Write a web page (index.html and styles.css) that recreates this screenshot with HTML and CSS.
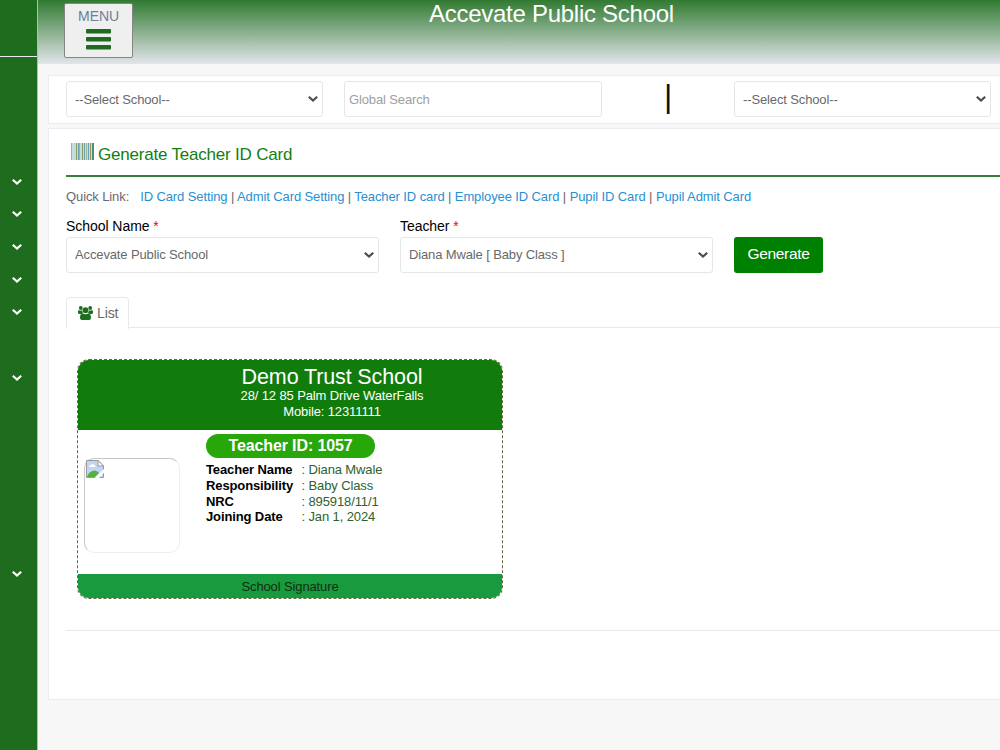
FILE: index.html
```html
<!DOCTYPE html>
<html lang="en">
<head>
  <meta charset="UTF-8">
  <title>Generate Teacher ID Card</title>
  <link rel="stylesheet" href="styles.css">
</head>
<body>
  <svg width="0" height="0" class="defs">
    <symbol id="chevron" viewBox="0 0 12 8"><path d="M1.8 1.8 L6 5.6 L10.2 1.8" fill="none" stroke="currentColor" stroke-width="2.2"/></symbol>
  </svg>

  <aside class="sidebar">
    <div class="side-logo"></div>
    <ul class="side-nav">
      <li><svg><use href="#chevron"/></svg></li>
      <li><svg><use href="#chevron"/></svg></li>
      <li><svg><use href="#chevron"/></svg></li>
      <li><svg><use href="#chevron"/></svg></li>
      <li><svg><use href="#chevron"/></svg></li>
      <li></li>
      <li><svg><use href="#chevron"/></svg></li>
      <li></li>
      <li></li>
      <li></li>
      <li></li>
      <li></li>
      <li><svg><use href="#chevron"/></svg></li>
    </ul>
  </aside>

  <div class="main">
    <header class="topbar">
      <button class="menu-btn" type="button">
        <span>MENU</span>
        <svg width="25" height="21" viewBox="0 0 25 21" fill="#1e6c1e"><rect y="0" width="25" height="4.6" rx="1"/><rect y="8" width="25" height="4.6" rx="1"/><rect y="16" width="25" height="4.6" rx="1"/></svg>
      </button>
      <h1>Accevate Public School</h1>
    </header>

    <section class="panel filter">
      <div class="select-wrap"><select class="control"><option>--Select School--</option></select><svg><use href="#chevron"/></svg></div>
      <input class="control search" type="text" placeholder="Global Search">
      <span class="bar">|</span>
      <div class="select-wrap"><select class="control"><option>--Select School--</option></select><svg><use href="#chevron"/></svg></div>
    </section>

    <section class="panel content">
      <h2>
        <svg width="24" height="17" viewBox="0 0 24 17"><path d="M0 0h23v17H0z" fill="#c5dcd8"/><path d="M.5 0v17M8.500 0v17M15.500 0v17" stroke="#9db59a"/><path d="M5.500 0v17M11.500 0v17" stroke="#8c9c68"/><path d="M7.500 0v17M13.500 0v17M17.500 0v17" stroke="#6da2b0"/><path d="M19.500 0v17" stroke="#9a9860"/><path d="M22 0v17" stroke="#4d8d80" stroke-width="2"/></svg>
        <span>Generate Teacher ID Card</span>
      </h2>

      <p class="quick"><span>Quick Link:</span><a href="#">ID Card Setting</a> | <a href="#">Admit Card Setting</a> | <a href="#">Teacher ID card</a> | <a href="#">Employee ID Card</a> | <a href="#">Pupil ID Card</a> | <a href="#">Pupil Admit Card</a></p>

      <form class="row">
        <div class="field">
          <label>School Name <em>*</em></label>
          <div class="select-wrap"><select class="control"><option>Accevate Public School</option></select><svg><use href="#chevron"/></svg></div>
        </div>
        <div class="field">
          <label>Teacher <em>*</em></label>
          <div class="select-wrap"><select class="control"><option>Diana Mwale [ Baby Class ]</option></select><svg><use href="#chevron"/></svg></div>
        </div>
        <button class="generate" type="button">Generate</button>
      </form>

      <div class="tabs">
        <div class="tab">
          <svg width="15" height="14" viewBox="0 0 15 14" fill="#1e6c1e"><circle cx="2.800" cy="2" r="1.900"/><circle cx="12.200" cy="2" r="1.900"/><circle cx="7.500" cy="4.200" r="2.900"/><path d="M0 6.800V5.200Q.3 3.900 1.400 4.200Q2.800 5 4.100 4.300Q4.300 6 5 6.800Q3.500 7 2.800 7.900H1.200Q0 7.900 0 6.800zM15 6.800V5.200Q14.700 3.900 13.600 4.200Q12.200 5 10.900 4.300Q10.700 6 10 6.800Q11.500 7 12.200 7.900H13.800Q15 7.900 15 6.800zM2 12Q2 7.300 4.600 7.300Q7.500 9.300 10.400 7.300Q13 7.300 13 12Q13 14 11 14H4Q2 14 2 12z"/></svg>
          List
        </div>
      </div>

      <div class="id-card">
        <div class="card-head">
          <div class="school">Demo Trust School</div>
          <div>28/ 12 85 Palm Drive WaterFalls</div>
          <div>Mobile: 12311111</div>
        </div>
        <div class="card-body">
          <div class="photo">
            <svg width="18" height="18" viewBox="0 0 18 18"><path d="M.5.500H12L17.500 6V17.500H.5z" fill="#c3d5f6" stroke="#999"/><path d="M3 7Q3 5 5 5Q6 3 8 5Q9.500 5 9.500 7z" fill="#fff"/><path d="M1 17Q3 10.500 9 10.500Q12 11 13 13L9 17z" fill="#53b13e"/><path d="M8.500 18L18 9V12.500L13 18z" fill="#fff"/><path d="M12 .5V6H17.500z" fill="#fff" stroke="#999"/></svg>
          </div>
          <div class="details">
            <div class="badge">Teacher ID: 1057</div>
            <dl>
              <dt>Teacher Name</dt><dd>: Diana Mwale</dd>
              <dt>Responsibility</dt><dd>: Baby Class</dd>
              <dt>NRC</dt><dd>: 895918/11/1</dd>
              <dt>Joining Date</dt><dd>: Jan 1, 2024</dd>
            </dl>
          </div>
        </div>
        <div class="card-foot">School Signature</div>
      </div>
      <hr>
    </section>
  </div>
</body>
</html>
```
FILE: styles.css
```css
* {
  box-sizing: border-box;
}
body {
  margin: 0;
  height: 750px;
  display: flex;
  overflow: hidden;
  background: #f7f7f7;
  color: #676a6c;
  font-family: "Liberation Sans", Arial, sans-serif;
  font-size: 13px;
  letter-spacing: -0.12px;
}
h1, h2, p, ul, dl, dd {
  margin: 0;
  padding: 0;
  font-weight: normal;
}
.defs {
  position: absolute;
}

/* sidebar */
.sidebar {
  flex: 0 0 38px;
  background: #1e6c1e;
  border-right: 1px solid #a9c6a9;
}
.side-logo {
  height: 57px;
  border-bottom: 1px solid #e7eaec;
}
.side-nav {
  list-style: none;
  padding-top: 107.500px;
}
.side-nav li {
  height: 32.7px;
  padding: 13px 0 0 11px;
}
.side-nav svg {
  display: block;
  width: 12px;
  height: 8px;
  color: #fff;
}

/* top bar */
.main {
  flex: 1;
  min-width: 0;
}
.topbar {
  height: 64px;
  display: flex;
  background: linear-gradient(#317a31, #e2e5ea);
}
.menu-btn {
  width: 69px;
  height: 55px;
  margin: 3px 0 0 26px;
  padding: 0;
  display: flex;
  flex-direction: column;
  align-items: center;
  background: #efefef;
  border: 1px solid #858585;
  border-radius: 2px;
  color: #6c8096;
  font: 14px/16px "Liberation Sans", Arial, sans-serif;
  letter-spacing: -0.1px;
}
.menu-btn span {
  margin: 4px 0 5px;
}
h1 {
  margin-left: 296px;
  color: #fff;
  font-size: 24px;
  line-height: 28px;
  letter-spacing: -0.27px;
}

/* panels */
.panel {
  width: 970px;
  margin-left: 10px;
  background: #fff;
  border: 1px solid #ececf2;
}
.filter {
  height: 49px;
  margin-top: 11px;
  padding: 5px 17px;
  display: flex;
}
.control {
  display: block;
  width: 100%;
  height: 36px;
  padding: 0 8px;
  border: 1px solid #e5e6e7;
  border-radius: 3px;
  background: #fff;
  color: #676a6c;
  font: 13px "Liberation Sans", Arial, sans-serif;
  letter-spacing: -0.13px;
  appearance: none;
}
.select-wrap {
  position: relative;
  width: 257px;
}
.select-wrap svg {
  position: absolute;
  right: 4px;
  top: 14px;
  width: 12px;
  height: 8px;
  color: #4d4d4d;
}
.search {
  width: 258px;
  margin-left: 21px;
  padding: 0 4px;
}
.search::placeholder {
  color: #a0a0a0;
}
.bar {
  width: 132px;
  text-align: center;
  color: #111;
  font-size: 32px;
  line-height: 30px;
}

/* content */
.content {
  height: 572px;
  margin-top: 4px;
  padding: 0 17px;
}
h2 {
  height: 48px;
  padding: 14px 0 0 5px;
  display: flex;
  gap: 3px;
  border-bottom: 2px solid #378037;
  color: #128012;
  font-size: 17px;
  line-height: 24px;
  letter-spacing: -0.2px;
}
.quick {
  margin-top: 12px;
  line-height: 16px;
  letter-spacing: -0.105px;
}
.quick span {
  margin-right: 11px;
}
.quick a {
  color: #2a90d0;
  text-decoration: none;
}
.row {
  display: flex;
  align-items: flex-end;
  gap: 21px;
  margin-top: 12px;
}
.field, .field .select-wrap {
  width: 313px;
}
.field .control {
  padding-bottom: 1px;
}
label {
  display: block;
  height: 20px;
  color: #000;
  font-size: 14px;
  line-height: 18px;
  letter-spacing: -0.05px;
}
label em {
  color: #f00;
  font-style: normal;
}
.generate {
  width: 89px;
  height: 36px;
  padding: 0 0 3px;
  background: #008000;
  border: 0;
  border-radius: 3px;
  color: #fff;
  font: 15.500px "Liberation Sans", Arial, sans-serif;
  letter-spacing: -0.3px;
}
.tabs {
  height: 31px;
  margin-top: 24px;
  border-bottom: 1px solid #e7eaec;
}
.tab {
  width: 63px;
  height: 32px;
  padding: 0 0 2px 11px;
  display: flex;
  align-items: center;
  gap: 4px;
  background: #fff;
  border: 1px solid #e7eaec;
  border-bottom: 0;
  border-radius: 4px 4px 0 0;
  font-size: 14px;
}

/* id card */
.id-card {
  width: 426px;
  height: 240px;
  margin: 31px 0 0 11px;
  display: flex;
  flex-direction: column;
  border: 1px dashed #5f6b3a;
  border-radius: 12px;
  overflow: hidden;
}
.card-head {
  height: 69.500px;
  padding: 5px 0 0 84px;
  background: #117c0b;
  color: #fff;
  text-align: center;
  line-height: 15.500px;
}
.school {
  font-size: 21.500px;
  line-height: 25px;
  margin-bottom: -2px;
}
.card-body {
  flex: 1;
  display: flex;
}
.photo {
  width: 96px;
  height: 95px;
  margin: 28.500px 0 0 6px;
  padding: 1px;
  border: 1px solid #eee;
  border-top-color: #c8c8c8;
  border-left-color: #c8c8c8;
  border-radius: 10px;
}
.details {
  margin: 4.500px 0 0 26px;
}
.badge {
  width: 169px;
  height: 24px;
  background: #28a70b;
  border-radius: 12px;
  color: #fff;
  font-size: 16px;
  font-weight: bold;
  line-height: 24px;
  text-align: center;
}
dl {
  display: grid;
  grid-template-columns: 95.500px auto;
  margin-top: 4px;
  line-height: 15.800px;
}
dt {
  color: #000;
  font-weight: bold;
}
dd {
  color: #2e612e;
}
.card-foot {
  height: 24px;
  background: #189a3e;
  color: #12300f;
  line-height: 25px;
  text-align: center;
}
hr {
  margin: 31px 0 0;
  border: 0;
  border-top: 1px solid #e7eaec;
}
```
